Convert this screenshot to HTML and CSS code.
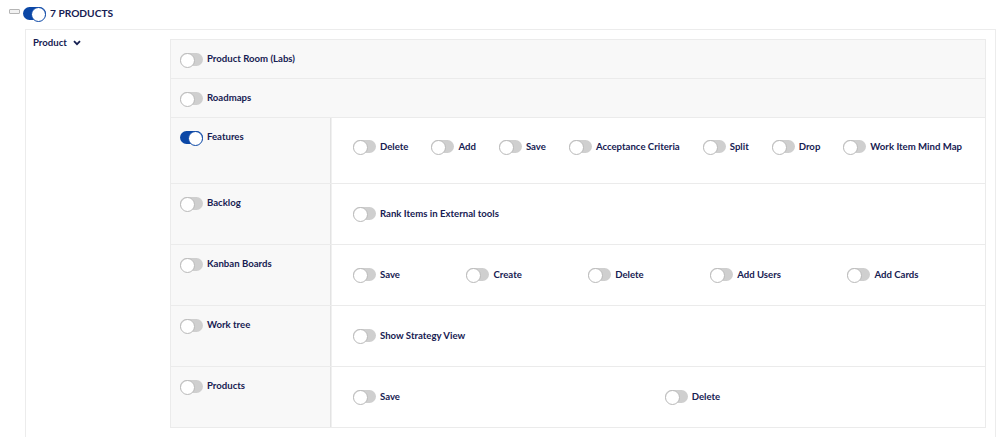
FILE: index.html
```html
<!DOCTYPE html>
<html>
<head>
<meta charset="utf-8">
<link rel="stylesheet" href="styles.css">
</head>
<body>
<div class="header">
  <span class="collapse"></span>
  <span class="tg on"></span>
  <span class="title">7 PRODUCTS</span>
</div>
<div class="panel">
  <div class="side">
    <span class="side-label">Product</span>
    <svg class="chev" width="8" height="6" viewBox="0 0 8 6"><path d="M1 1.2 L4 4.2 L7 1.2" fill="none" stroke="#162052" stroke-width="1.8"/></svg>
  </div>
  <div class="table">
    <div class="row">
      <div class="main full"><span class="tg"></span><span class="lbl">Product Room (Labs)</span></div>
    </div>
    <div class="row">
      <div class="main full"><span class="tg"></span><span class="lbl">Roadmaps</span></div>
    </div>
    <div class="row">
      <div class="main"><span class="tg on"></span><span class="lbl">Features</span></div>
      <div class="subs tall">
        <div class="item"><span class="tg"></span><span class="lbl">Delete</span></div>
        <div class="item"><span class="tg"></span><span class="lbl">Add</span></div>
        <div class="item"><span class="tg"></span><span class="lbl">Save</span></div>
        <div class="item"><span class="tg"></span><span class="lbl">Acceptance Criteria</span></div>
        <div class="item"><span class="tg"></span><span class="lbl">Split</span></div>
        <div class="item"><span class="tg"></span><span class="lbl">Drop</span></div>
        <div class="item"><span class="tg"></span><span class="lbl">Work Item Mind Map</span></div>
      </div>
    </div>
    <div class="row">
      <div class="main"><span class="tg"></span><span class="lbl">Backlog</span></div>
      <div class="subs">
        <div class="item"><span class="tg"></span><span class="lbl">Rank Items in External tools</span></div>
      </div>
    </div>
    <div class="row">
      <div class="main"><span class="tg"></span><span class="lbl">Kanban Boards</span></div>
      <div class="subs">
        <div class="item"><span class="tg"></span><span class="lbl">Save</span></div>
        <div class="item"><span class="tg"></span><span class="lbl">Create</span></div>
        <div class="item"><span class="tg"></span><span class="lbl">Delete</span></div>
        <div class="item"><span class="tg"></span><span class="lbl">Add Users</span></div>
        <div class="item"><span class="tg"></span><span class="lbl">Add Cards</span></div>
      </div>
    </div>
    <div class="row">
      <div class="main"><span class="tg"></span><span class="lbl">Work tree</span></div>
      <div class="subs">
        <div class="item"><span class="tg"></span><span class="lbl">Show Strategy View</span></div>
      </div>
    </div>
    <div class="row last">
      <div class="main"><span class="tg"></span><span class="lbl">Products</span></div>
      <div class="subs">
        <div class="item"><span class="tg"></span><span class="lbl">Save</span></div>
        <div class="item"><span class="tg"></span><span class="lbl">Delete</span></div>
      </div>
    </div>
  </div>
</div>
</body>
</html>
```
FILE: styles.css
```css
* { box-sizing: border-box; }
html, body { margin: 0; padding: 0; background: #fff; }
body {
  font-family: "Lato", "Open Sans", sans-serif;
  font-weight: 700;
  font-size: 9.6px;
  color: #162052;
}
.header {
  display: flex;
  align-items: center;
  height: 29px;
  padding: 0 0 3px 9px;
}
.collapse {
  width: 11px;
  height: 5px;
  border: 1px solid #b5b5b5;
  border-radius: 1px;
  background: #f2f2f2;
  margin-right: 3px;
  margin-top: -4px;
}
.title { font-size: 10.2px; margin-left: 4px; }
.tg {
  position: relative;
  flex: none;
  display: inline-block;
  width: 23px;
  height: 13px;
  border-radius: 7px;
  background: #cfcfcf;
}
.tg::before {
  content: "";
  position: absolute;
  left: 0;
  top: 0;
  width: 13px;
  height: 13px;
  border-radius: 50%;
  background: #fff;
  border: 1px solid #b9b9b9;
}
.tg.on { background: #0b47a6; }
.tg.on::before { left: auto; right: 0; border-color: #0b47a6; }
.panel {
  margin-left: 25px;
  width: 971px;
  height: 420px;
  border: 1px solid #ececec;
  border-bottom: none;
  display: flex;
  padding: 9px 9px 0 0;
}
.side {
  width: 144px;
  flex: none;
  display: flex;
  align-items: flex-start;
  gap: 6px;
  padding: 0 0 0 7px;
  margin-top: -2px;
}
.chev { margin-top: 3px; }
.table {
  flex: 1;
  border: 1px solid #ebebeb;
  align-self: flex-start;
}
.row {
  display: flex;
  border-bottom: 1px solid #ebebeb;
  background: #f8f8f8;
}
.row.last { border-bottom: none; }
.main {
  width: 159px;
  flex: none;
  display: flex;
  align-items: flex-start;
  gap: 4px;
  padding: 13px 9px 12px;
}
.main.full { flex: 1; }
.lbl { line-height: 13px; white-space: nowrap; }
.main .lbl { margin-top: -1px; }
.subs {
  flex: 1;
  display: flex;
  align-items: center;
  background: #fff;
  border-left: 1px solid #e3e3e3;
  box-shadow: inset 1px 0 0 #f0f0f0;
  padding: 23px 0 24px 22px;
}
.subs.tall { padding: 22px 0 30px 22px; }
.item {
  flex: 1 1 auto;
  display: flex;
  align-items: center;
  gap: 4px;
}
```
